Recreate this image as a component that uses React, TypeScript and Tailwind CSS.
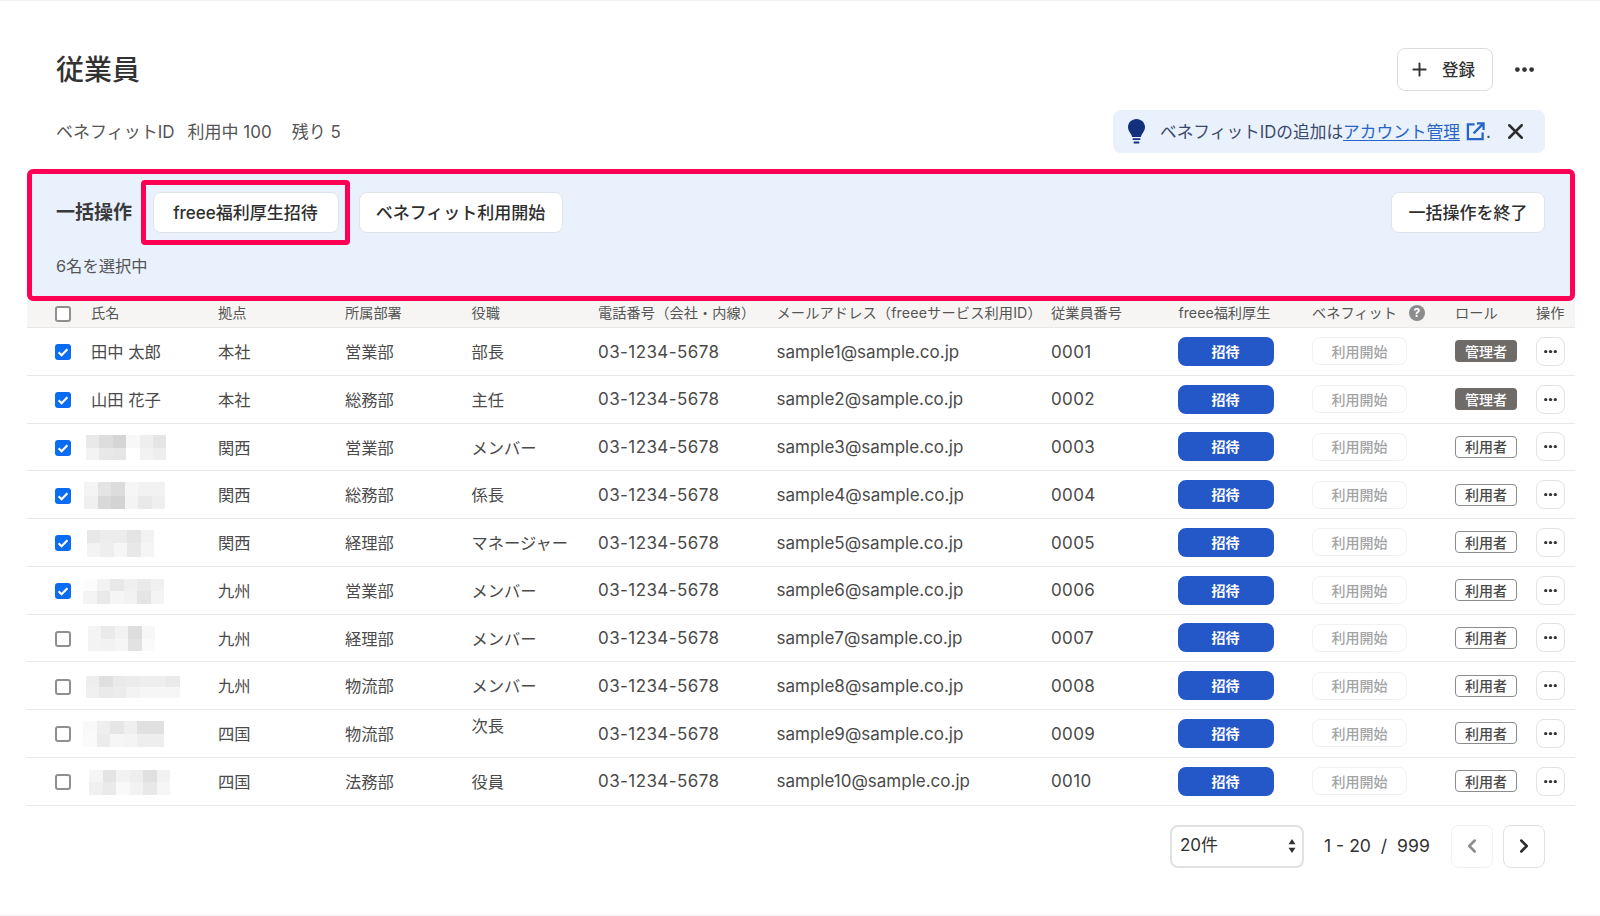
import { Plus, X, ChevronLeft, ChevronRight } from 'lucide-react';

const font = { fontFamily: 'Inter, "Noto Sans CJK JP", sans-serif' };

type Mosaic = { left: number; top: string[]; bottom: string[]; cw: number; ch: number };

type Emp = {
  name?: string;
  mosaic?: Mosaic;
  base: string;
  dept: string;
  title: string;
  checked: boolean;
  role: '管理者' | '利用者';
};

const employees: Emp[] = [
  { name: '田中 太郎', base: '本社', dept: '営業部', title: '部長', checked: true, role: '管理者' },
  { name: '山田 花子', base: '本社', dept: '総務部', title: '主任', checked: true, role: '管理者' },
  {
    mosaic: { left: -5, cw: 13.4, ch: 12.6, top: ['#e9e9e9', '#dddddd', '#d5d5d5', '#f8f8f8', '#eeeeee', '#e5e5e5'], bottom: ['#f3f3f3', '#e8e8e8', '#e6e6e6', '#ffffff', '#f2f2f2', '#eeeeee'] },
    base: '関西', dept: '営業部', title: 'メンバー', checked: true, role: '利用者',
  },
  {
    mosaic: { left: -7, cw: 13.5, ch: 13.4, top: ['#f4f4f4', '#e4e4e4', '#dcdcdc', '#f6f6f6', '#f2f2f2', '#f2f2f2'], bottom: ['#f0f0f0', '#d9d9d9', '#d3d3d3', '#f4f4f4', '#e9e9e9', '#efefef'] },
    base: '関西', dept: '総務部', title: '係長', checked: true, role: '利用者',
  },
  {
    mosaic: { left: -4, cw: 13.4, ch: 13.4, top: ['#e8e8e8', '#ececec', '#ececec', '#e4e4e4', '#f2f2f2'], bottom: ['#f3f3f3', '#eeeeee', '#f6f6f6', '#e8e8e8', '#f5f5f5'] },
    base: '関西', dept: '経理部', title: 'マネージャー', checked: true, role: '利用者',
  },
  {
    mosaic: { left: -8, cw: 13.5, ch: 12.6, top: ['#fcfcfc', '#f2f2f2', '#e8e8e8', '#f0f0f0', '#eaeaea', '#f0f0f0'], bottom: ['#f4f4f4', '#e9e9e9', '#f5f5f5', '#f2f2f2', '#e5e5e5', '#f4f4f4'] },
    base: '九州', dept: '営業部', title: 'メンバー', checked: true, role: '利用者',
  },
  {
    mosaic: { left: -3, cw: 13.4, ch: 12.6, top: ['#f4f4f4', '#eaeaea', '#f2f2f2', '#dddddd', '#f7f7f7'], bottom: ['#f3f3f3', '#f2f2f2', '#f6f6f6', '#e2e2e2', '#fafafa'] },
    base: '九州', dept: '経理部', title: 'メンバー', checked: false, role: '利用者',
  },
  {
    mosaic: { left: -5, cw: 13.4, ch: 11, top: ['#eeeeee', '#e0e0e0', '#eaeaea', '#ececec', '#eeeeee', '#eeeeee', '#eaeaea'], bottom: ['#f0f0f0', '#eaeaea', '#ececec', '#f3f3f3', '#f6f6f6', '#f6f6f6', '#f6f6f6'] },
    base: '九州', dept: '物流部', title: 'メンバー', checked: false, role: '利用者',
  },
  {
    mosaic: { left: -8, cw: 13.5, ch: 13, top: ['#f9f9f9', '#eeeeee', '#e6e6e6', '#efefef', '#e0e0e0', '#e0e0e0'], bottom: ['#fafafa', '#ececec', '#f6f6f6', '#f4f4f4', '#eeeeee', '#eeeeee'] },
    base: '四国', dept: '物流部', title: '次長', checked: false, role: '利用者',
  },
  {
    mosaic: { left: -2, cw: 13.5, ch: 12.6, top: ['#f5f5f5', '#e4e4e4', '#f2f2f2', '#eeeeee', '#e0e0e0', '#f2f2f2'], bottom: ['#f0f0f0', '#eaeaea', '#f9f9f9', '#f2f2f2', '#e8e8e8', '#f6f6f6'] },
    base: '四国', dept: '法務部', title: '役員', checked: false, role: '利用者',
  },
];

const cols = 'grid grid-cols-[64px_127px_127px_126.5px_126.5px_178.5px_274.5px_127.5px_133.5px_143px_81px_1fr] items-center';

function Dots({ className }: { className: string }) {
  return (
    <svg viewBox="0 0 16 4" className={className} fill="currentColor">
      <circle cx="2" cy="2" r="2" />
      <circle cx="8" cy="2" r="2" />
      <circle cx="14" cy="2" r="2" />
    </svg>
  );
}

function Checkbox({ checked }: { checked: boolean }) {
  if (checked) {
    return (
      <span className="w-4 h-4 rounded-[3px] bg-[#0b6bf2] flex items-center justify-center">
        <svg viewBox="0 0 16 16" className="w-4 h-4" fill="none" stroke="#fff" strokeWidth="2.2">
          <path d="M3.6 8.2l3 3 5.8-6" />
        </svg>
      </span>
    );
  }
  return <span className="block w-4 h-4 rounded-[3px] border-2 border-[#8f8f8f] bg-white" />;
}

function NameMosaic({ m }: { m: Mosaic }) {
  return (
    <div className="flex flex-col" style={{ marginLeft: m.left }}>
      {[m.top, m.bottom].map((row, i) => (
        <div key={i} className="flex">
          {row.map((c, j) => (
            <span key={j} className="block" style={{ width: m.cw, height: m.ch, backgroundColor: c }} />
          ))}
        </div>
      ))}
    </div>
  );
}

function WhiteBtn({ children, className }: { children: React.ReactNode; className: string }) {
  return (
    <button className={`h-[41px] pt-[2px] bg-white border border-[#dfe3ea] rounded-lg text-[17px] font-medium text-[#2f2f2f] flex items-center justify-center ${className}`}>
      {children}
    </button>
  );
}

function Row({ e, i }: { e: Emp; i: number }) {
  return (
    <div className={`${cols} h-[47.75px] border-b border-[#e8e8e8] text-[16.3px] text-[#4a4a4a]`}>
      <div className="pl-[28.2px] translate-y-px">
        <Checkbox checked={e.checked} />
      </div>
      <div className="translate-y-px">{e.mosaic ? <NameMosaic m={e.mosaic} /> : e.name}</div>
      <div className="translate-y-px">{e.base}</div>
      <div className="translate-y-px">{e.dept}</div>
      <div className={e.title === '次長' ? '-translate-y-[7px]' : 'translate-y-px'}>{e.title}</div>
      <div className="translate-y-px text-[17px] tracking-[0.42px]">03-1234-5678</div>
      <div className="translate-y-px text-[17px]">sample{i + 1}@sample.co.jp</div>
      <div className="translate-y-px text-[17px] tracking-[0.4px]">{String(i + 1).padStart(4, '0')}</div>
      <div>
        <button className="-ml-px w-[96px] h-[29px] rounded-lg bg-[#2458c8] text-white text-[14px] font-bold flex items-center justify-center">招待</button>
      </div>
      <div>
        <button className="w-[95px] h-[28px] rounded-lg bg-white border border-[#f1f1f1] text-[#a3a3a3] text-[14px] font-medium flex items-center justify-center">利用開始</button>
      </div>
      <div>
        {e.role === '管理者' ? (
          <span className="w-[62px] h-[22px] rounded-[4px] bg-[#6e6b69] text-white text-[14px] font-medium flex items-center justify-center">管理者</span>
        ) : (
          <span className="w-[62px] h-[22px] rounded-[4px] bg-white border border-[#8c8c8c] text-[#4a4a4a] text-[14px] font-medium flex items-center justify-center">利用者</span>
        )}
      </div>
      <div>
        <button className="w-[29px] h-[29px] rounded-lg bg-white border border-[#e3e3e3] text-[#333] flex items-center justify-center">
          <Dots className="w-[13px] h-[3.2px]" />
        </button>
      </div>
    </div>
  );
}

export default function App() {
  return (
    <div style={font} className="w-[1600px] h-[916px] bg-white border-t border-b border-[#eef2f8] overflow-hidden text-[#323232]">
      <div className="pt-[47px] pl-[56px] pr-[55px] flex items-center justify-between">
        <h1 className="text-[28px] font-medium leading-none text-[#323232]">従業員</h1>
        <div className="flex items-center">
          <button className="w-[96px] h-[43px] bg-white border border-[#dcdcdc] rounded-lg flex items-center justify-center gap-[12px] text-[16.5px] font-medium pr-[6px]">
            <Plus className="w-[21px] h-[21px]" strokeWidth={2.2} />
            <span className="translate-y-px">登録</span>
          </button>
          <Dots className="w-[19px] h-[5px] ml-[22px] mr-[11px] text-[#333]" />
        </div>
      </div>

      <div className="mt-[19px] pl-[56px] pr-[55px] h-[43px] flex items-center justify-between">
        <div className="text-[17px] text-[#555] flex translate-y-px">
          <span>ベネフィットID</span>
          <span className="ml-[13px]">利用中 100</span>
          <span className="ml-[20px]">残り 5</span>
        </div>
        <div className="w-[432px] h-[43px] rounded-lg bg-[#e9f1fc] flex items-center pl-[15px] text-[16.7px] text-[#3b4a6b]">
          <svg viewBox="0 0 17 25" className="w-[17px] h-[25px] shrink-0 text-[#12307c]" fill="currentColor">
            <path d="M8.5 0C3.8 0 0 3.6 0 8.2c0 3.4 2 5.2 3.2 7.2.6 1 .8 1.8 .9 2.6h8.8c.1-.8 .3-1.6 .9-2.6C15 13.4 17 11.6 17 8.2 17 3.6 13.2 0 8.5 0z" />
            <rect x="4.6" y="19.2" width="7.8" height="1.8" rx=".6" />
            <rect x="5.6" y="22.6" width="5.8" height="1.8" rx=".6" />
          </svg>
          <span className="ml-[15px] whitespace-nowrap translate-y-px">ベネフィットIDの追加は</span>
          <span className="text-[#2864c8] underline underline-offset-2 whitespace-nowrap translate-y-px">アカウント管理</span>
          <svg viewBox="0 0 20 20" className="w-[19px] h-[19px] ml-[6px] shrink-0 text-[#2864c8]" fill="none" stroke="currentColor" strokeWidth="2.4">
            <path d="M9 2.5H2v15.5h15.5V11" />
            <path d="M8 12 18 2M11.5 1.5H18.5V8.5" />
          </svg>
          <span className="ml-[1px] translate-y-px">.</span>
          <X className="w-[25px] h-[25px] ml-[12px] text-[#2c2c2c]" strokeWidth={2.4} />
        </div>
      </div>

      <div className="mt-[16px] ml-[27px] mr-[25px] h-[132px] rounded-[6px] border-[5px] border-[#ff0055] bg-[#e9f1fd] pl-[24px] pr-[25px]">
        <div className="flex items-center pt-[6px]">
          <span className="text-[19px] font-bold text-[#3a3a3a] w-[85px] whitespace-nowrap translate-y-px">一括操作</span>
          <div className="rounded-[4px] border-[5px] border-[#ff0055] px-[6.5px] py-[7px]">
            <WhiteBtn className="w-[186px]">freee福利厚生招待</WhiteBtn>
          </div>
          <WhiteBtn className="w-[204px] ml-[8.5px]">ベネフィット利用開始</WhiteBtn>
          <WhiteBtn className="w-[154px] ml-auto">一括操作を終了</WhiteBtn>
        </div>
        <div className="mt-[9px] text-[16.3px] leading-[24px] text-[#555]">6名を選択中</div>
      </div>

      <div className="ml-[27px] mr-[25px]">
        <div className={`${cols} h-[27px] bg-[#f6f5f4] border-b border-[#e8e8e8] text-[14.2px] text-[#555]`}>
          <div className="pl-[28.2px]">
            <Checkbox checked={false} />
          </div>
          <div className="-translate-y-px">氏名</div>
          <div className="-translate-y-px">拠点</div>
          <div className="-translate-y-px">所属部署</div>
          <div className="-translate-y-px">役職</div>
          <div className="-translate-y-px tracking-[0.1px]">電話番号（会社・内線）</div>
          <div className="-translate-y-px tracking-[0.15px] whitespace-nowrap">メールアドレス（freeeサービス利用ID）</div>
          <div className="-translate-y-px">従業員番号</div>
          <div className="-translate-y-px">freee福利厚生</div>
          <div className="flex items-center -translate-y-px">
            ベネフィット
            <span className="ml-[12px] w-[16px] h-[16px] rounded-full bg-[#8c8c8c] text-white text-[12px] font-bold flex items-center justify-center">?</span>
          </div>
          <div className="-translate-y-px">ロール</div>
          <div className="-translate-y-px">操作</div>
        </div>
        {employees.map((e, i) => (
          <Row key={i} e={e} i={i} />
        ))}
      </div>

      <div className="mt-[19px] pr-[55px] flex items-center justify-end">
        <div className="w-[134px] h-[43px] rounded-lg bg-white border-2 border-[#e3e0e0] flex items-center justify-between pl-[8px] pr-[6px] text-[17px]">
          20件
          <svg viewBox="0 0 8 14" className="w-[8px] h-[14px] text-[#333]" fill="currentColor">
            <path d="M4 0l3.5 5.2h-7zM4 14 .5 8.8h7z" />
          </svg>
        </div>
        <div className="ml-[20px] w-[107px] text-[17.6px] whitespace-pre">1 - 20  /  999</div>
        <button className="ml-[20px] w-[42px] h-[43px] rounded-lg bg-white border border-[#f1f1f1] flex items-center justify-center text-[#8c8c8c]">
          <ChevronLeft className="w-[22px] h-[22px]" strokeWidth={2.7} />
        </button>
        <button className="ml-[10px] w-[42px] h-[43px] rounded-lg bg-white border border-[#dfdfdf] flex items-center justify-center text-[#2c2c2c]">
          <ChevronRight className="w-[22px] h-[22px]" strokeWidth={2.7} />
        </button>
      </div>
    </div>
  );
}
